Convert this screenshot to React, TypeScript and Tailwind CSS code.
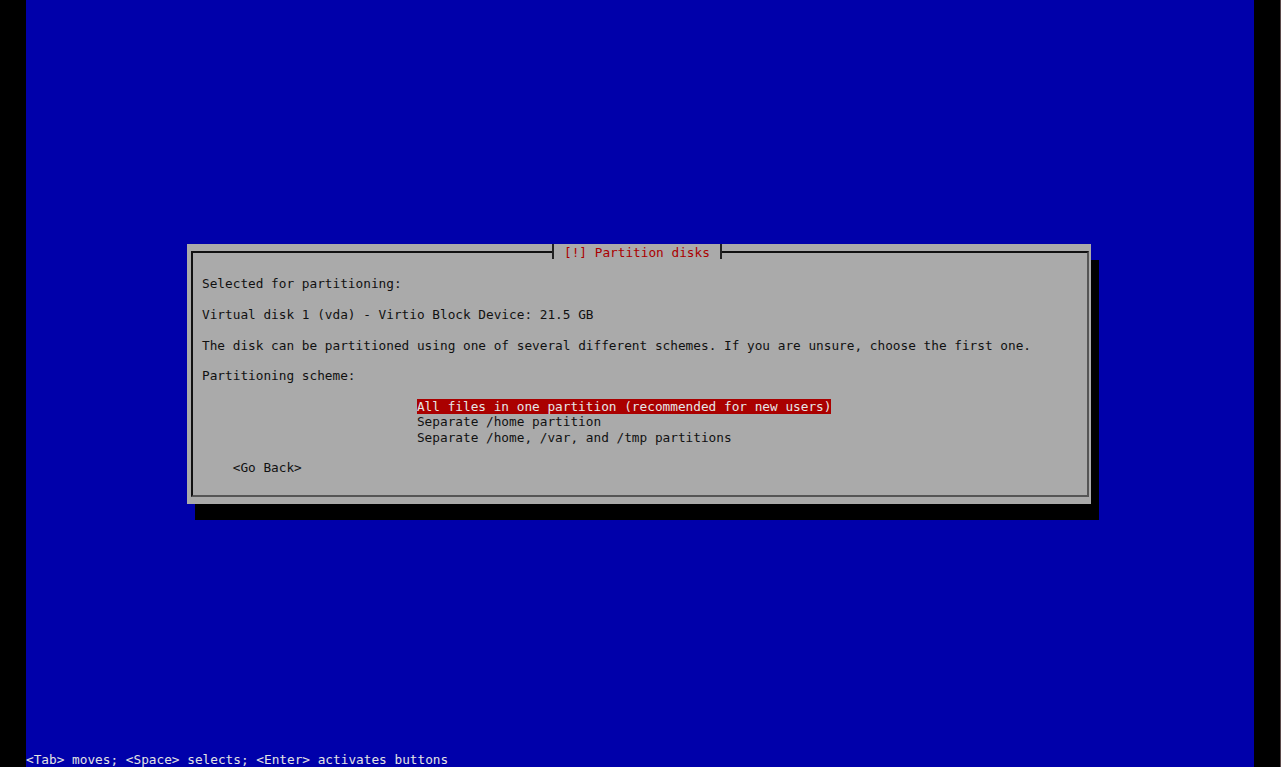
const options = [
  'All files in one partition (recommended for new users)',
  'Separate /home partition',
  'Separate /home, /var, and /tmp partitions',
];

function Row({ children, className = '' }: { children?: React.ReactNode; className?: string }) {
  return <div className={`h-[15.35px] whitespace-pre ${className}`}>{children}</div>;
}

export default function App() {
  const selected = 0;

  return (
    <div className="flex h-[767px] w-[1281px] overflow-hidden bg-black font-['DejaVu_Sans_Mono',monospace] text-[12.75px] leading-[15.35px]">
      <div className="w-[26px] shrink-0 bg-black" />

      <div className="flex w-[1228px] shrink-0 flex-col bg-[#0000aa]">
        {/* dialog */}
        <div className="relative ml-[161px] mt-[244px] h-[260px] w-[904px] bg-[#aaaaaa] pl-[4px] pr-[2px] pt-[7px] shadow-[8px_16px_0_0_#000]">
          <div className="h-[246px] border-2 border-b-[#555555] border-l-[#111111] border-r-[#555555] border-t-[#111111] pl-[9px] pt-[23.3px] text-[#111111]">
            <Row>Selected for partitioning:</Row>
            <Row />
            <Row>Virtual disk 1 (vda) - Virtio Block Device: 21.5 GB</Row>
            <Row />
            <Row>The disk can be partitioned using one of several different schemes. If you are unsure, choose the first one.</Row>
            <Row />
            <Row>Partitioning scheme:</Row>
            <Row />
            <div className="pl-[28ch]">
              {options.map((opt, i) => (
                <Row key={i}>
                  <span className={i === selected ? 'bg-[#aa0000] text-[#e6e6e6]' : ''}>{opt}</span>
                </Row>
              ))}
            </div>
            <Row />
            <Row className="pl-[4ch]">&lt;Go Back&gt;</Row>
          </div>

          {/* title over the top border */}
          <div className="absolute left-[365px] top-0 flex h-[15px] items-center border-x-2 border-[#222222] bg-[#aaaaaa] px-[10px] pt-[3px] whitespace-pre text-[#aa0000]">
            [!] Partition disks
          </div>
        </div>

        <div className="flex-1" />

        <Row className="text-[#e4e4e4]">&lt;Tab&gt; moves; &lt;Space&gt; selects; &lt;Enter&gt; activates buttons</Row>
      </div>

      <div className="flex-1 border-r border-[#5a4a4a] bg-black" />
    </div>
  );
}
